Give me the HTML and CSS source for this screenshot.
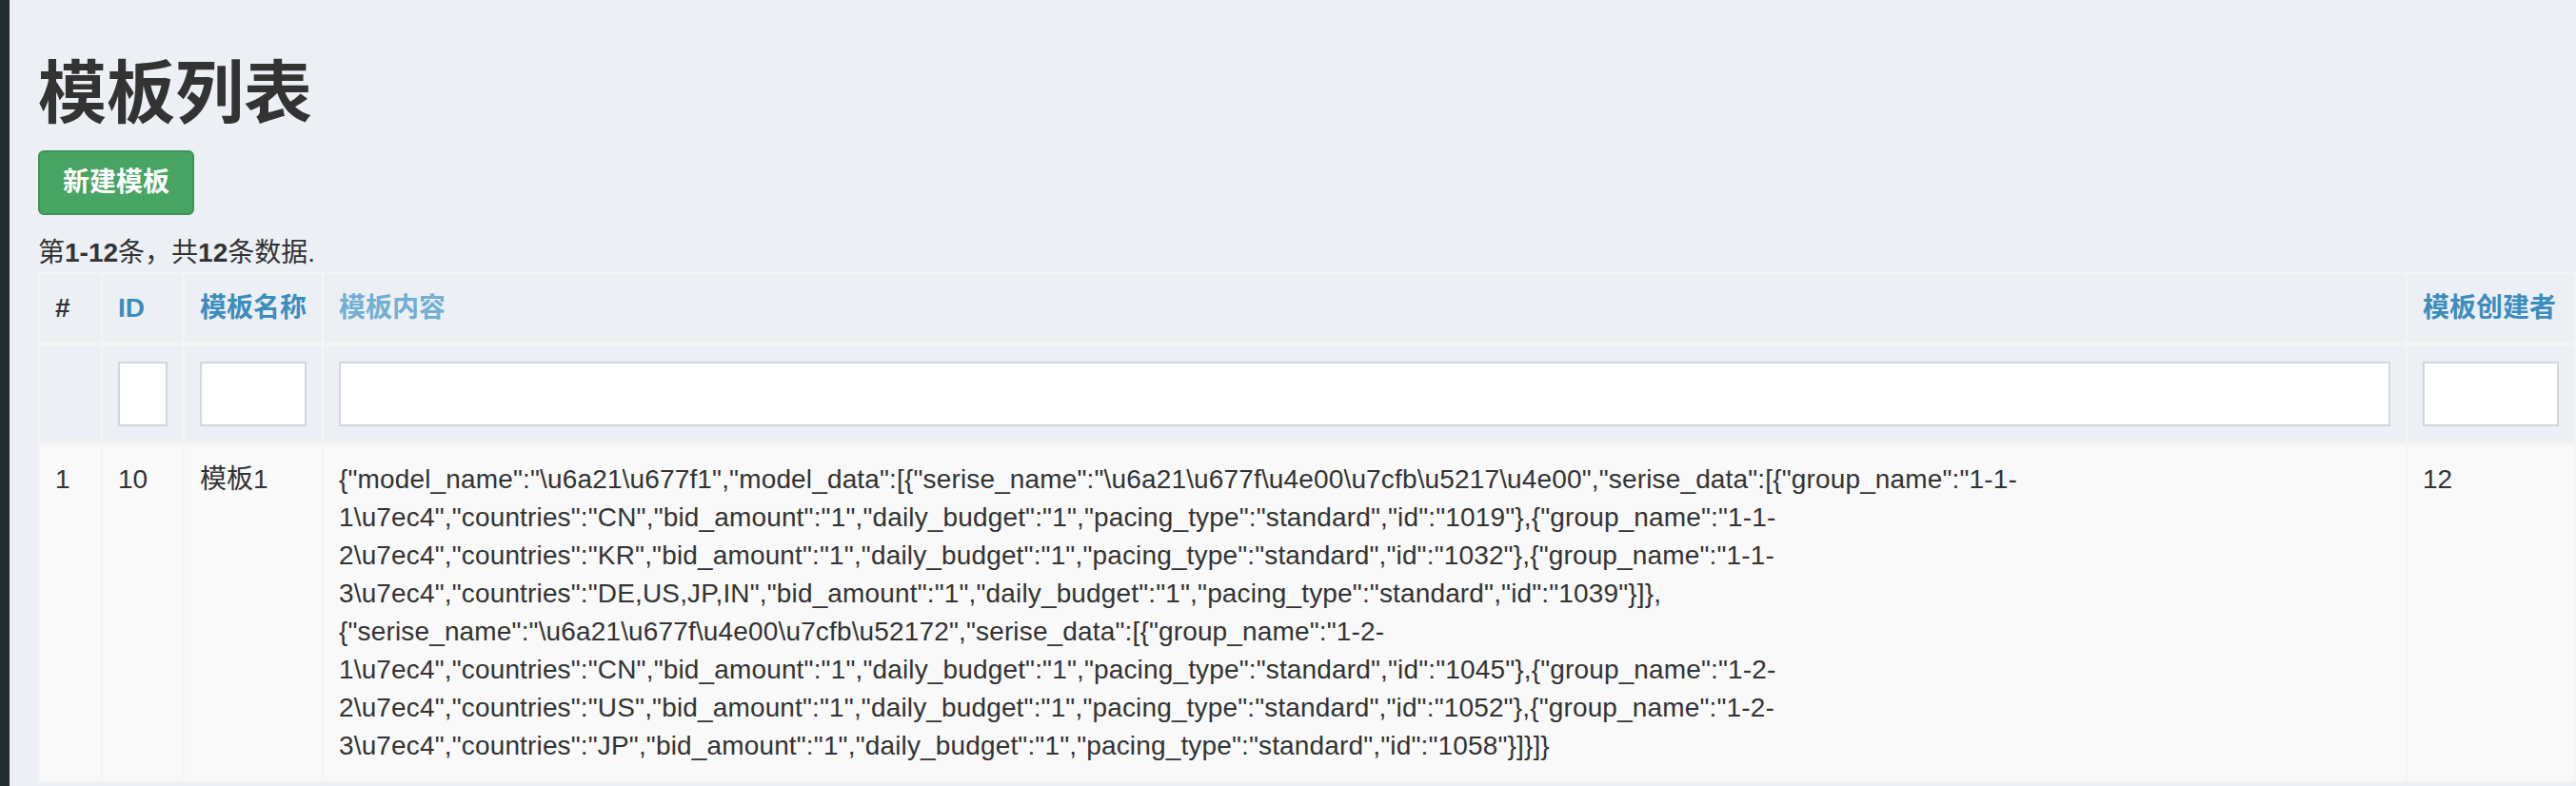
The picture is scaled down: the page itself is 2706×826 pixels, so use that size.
FILE: index.html
```html
<!DOCTYPE html>
<html lang="zh-CN">
<head>
<meta charset="utf-8">
<title>模板列表</title>
<link rel="stylesheet" href="styles.css">
</head>
<body>
<div class="layout">
  <aside class="sidebar"></aside>
  <main class="content">
    <h1 class="page-title">模板列表</h1>
    <div class="actions"><a class="btn btn-success" href="#">新建模板</a></div>
    <div class="grid-view">
      <div class="summary">第<b>1-12</b>条，共<b>12</b>条数据.</div>
      <table class="table">
        <colgroup>
          <col class="c-serial">
          <col class="c-id">
          <col class="c-name">
          <col class="c-content">
          <col class="c-creator">
        </colgroup>
        <thead>
          <tr class="head-row">
            <th>#</th>
            <th><a class="sort" href="#">ID</a></th>
            <th><a class="sort" href="#">模板名称</a></th>
            <th><a class="sort sort-hover" href="#">模板内容</a></th>
            <th><a class="sort" href="#">模板创建者</a></th>
          </tr>
          <tr class="filter-row">
            <td></td>
            <td><input class="form-control" type="text"></td>
            <td><input class="form-control" type="text"></td>
            <td><input class="form-control" type="text"></td>
            <td><input class="form-control" type="text"></td>
          </tr>
        </thead>
        <tbody>
          <tr class="odd">
            <td>1</td>
            <td>10</td>
            <td>模板1</td>
            <td class="json">{"model_name":"\u6a21\u677f1","model_data":[{"serise_name":"\u6a21\u677f\u4e00\u7cfb\u5217\u4e00","serise_data":[{"group_name":"1-1-<br>1\u7ec4","countries":"CN","bid_amount":"1","daily_budget":"1","pacing_type":"standard","id":"1019"},{"group_name":"1-1-<br>2\u7ec4","countries":"KR","bid_amount":"1","daily_budget":"1","pacing_type":"standard","id":"1032"},{"group_name":"1-1-<br>3\u7ec4","countries":"DE,US,JP,IN","bid_amount":"1","daily_budget":"1","pacing_type":"standard","id":"1039"}]},<br>{"serise_name":"\u6a21\u677f\u4e00\u7cfb\u52172","serise_data":[{"group_name":"1-2-<br>1\u7ec4","countries":"CN","bid_amount":"1","daily_budget":"1","pacing_type":"standard","id":"1045"},{"group_name":"1-2-<br>2\u7ec4","countries":"US","bid_amount":"1","daily_budget":"1","pacing_type":"standard","id":"1052"},{"group_name":"1-2-<br>3\u7ec4","countries":"JP","bid_amount":"1","daily_budget":"1","pacing_type":"standard","id":"1058"}]}]}</td>
            <td>12</td>
          </tr>
        </tbody>
      </table>
    </div>
  </main>
</div>
</body>
</html>
```

FILE: styles.css
```css
html, body {
  margin: 0;
  padding: 0;
}

body {
  background: #ecf0f5;
  color: #333333;
  font-family: "Liberation Sans", "Noto Sans CJK SC", sans-serif;
  font-size: 28px;
  line-height: 40px;
  overflow: hidden;
}

.layout {
  display: flex;
  min-height: 100vh;
}

.sidebar {
  flex: 0 0 10px;
  background: #222d32;
}

.content {
  flex: 1 1 auto;
  min-width: 0;
  padding: 19px 0 0 30px;
}

.page-title {
  margin: 40px 0 20px;
  font-size: 72px;
  line-height: 79px;
  font-weight: 700;
  color: #333333;
}

.actions {
  display: flex;
  margin: 0 0 20px;
}

.btn {
  display: inline-block;
  padding: 12px 24px;
  font-size: 28px;
  line-height: 40px;
  font-weight: 700;
  border: 2px solid transparent;
  border-radius: 6px;
  text-decoration: none;
}

.btn-success {
  background: #47a463;
  border-color: #3e9457;
  color: #ffffff;
}

.summary {
  line-height: 40px;
}

.summary b {
  font-weight: 700;
}

.table {
  width: 100%;
  table-layout: fixed;
  border-collapse: collapse;
  border-spacing: 0;
}

.c-serial { width: 66px; }
.c-id { width: 86px; }
.c-name { width: 146px; }
.c-content { width: 2189px; }

.table th,
.table td {
  border: 2px solid #f4f4f4;
  padding: 16px;
  text-align: left;
  vertical-align: top;
  line-height: 40px;
}

.table thead th {
  vertical-align: bottom;
  font-weight: 700;
  border-bottom-width: 4px;
}

.table thead td {
  border-bottom-width: 4px;
}

.sort {
  color: #3c8dbc;
  text-decoration: none;
}

.sort-hover {
  color: #72afd2;
}

.form-control {
  display: block;
  box-sizing: border-box;
  width: 100%;
  height: 68px;
  margin: 0;
  padding: 12px 24px;
  border: 2px solid #d2d6de;
  border-radius: 0;
  background: #ffffff;
  font: inherit;
  outline: none;
}

.table tbody tr.odd td {
  background: #f9f9f9;
}

.json {
  white-space: nowrap;
  letter-spacing: 0.15px;
}
```
